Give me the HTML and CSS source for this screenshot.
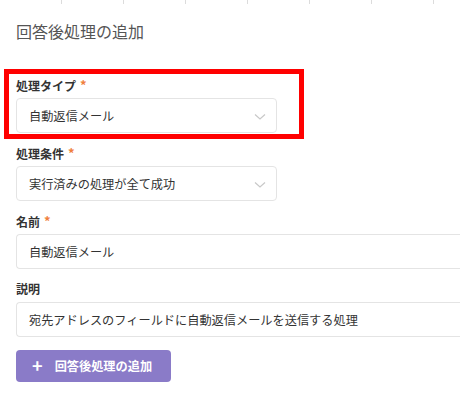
FILE: index.html
```
<!DOCTYPE html>
<html lang="ja">
<head>
<meta charset="utf-8">
<link rel="stylesheet" href="styles.css">
</head>
<body>
<div class="tabs">
  <span></span><span></span><span></span><span></span><span></span><span></span><span class="last"></span>
</div>
<h2 class="title">回答後処理の追加</h2>
<div class="form">
  <div class="field highlight">
    <label class="label">処理タイプ<span class="req">*</span></label>
    <div class="select short">
      <span>自動返信メール</span>
      <svg class="chev" width="12" height="8" viewBox="0 0 12 8"><path d="M1 1.5 L6 6 L11 1.5" fill="none" stroke="#c8c8c8" stroke-width="1.2"/></svg>
    </div>
  </div>
  <div class="field">
    <label class="label">処理条件<span class="req">*</span></label>
    <div class="select short">
      <span>実行済みの処理が全て成功</span>
      <svg class="chev" width="12" height="8" viewBox="0 0 12 8"><path d="M1 1.5 L6 6 L11 1.5" fill="none" stroke="#c8c8c8" stroke-width="1.2"/></svg>
    </div>
  </div>
  <div class="field">
    <label class="label">名前<span class="req">*</span></label>
    <div class="select wide"><span>自動返信メール</span></div>
  </div>
  <div class="field">
    <label class="label">説明</label>
    <div class="select wide"><span>宛先アドレスのフィールドに自動返信メールを送信する処理</span></div>
  </div>
  <button class="btn"><span class="plus">+</span>回答後処理の追加</button>
</div>
</body>
</html>
```
FILE: styles.css
```
* , *::before, *::after { box-sizing: border-box; }
body {
  margin: 0;
  width: 460px;
  height: 406px;
  overflow: hidden;
  background: #fff;
  font-family: "Noto Sans CJK JP", "Noto Sans", sans-serif;
  color: #333;
}
.tabs {
  display: flex;
  height: 4px;
  padding-left: 61px;
  overflow: hidden;
}
.tabs span {
  width: 62px;
  border-left: 1px solid #dcdcdc;
  flex: none;
}
.tabs span.last { width: 27px; }
.title {
  margin: 0;
  padding: 17px 0 0 16px;
  height: 73px;
  font-size: 16px;
  font-weight: normal;
  color: #555;
  line-height: 20px;
}
.form {
  padding-left: 16px;
  display: flex;
  flex-direction: column;
}
.field {
  display: flex;
  flex-direction: column;
  margin-bottom: 12px;
}
.field.highlight {
  position: relative;
}
.field.highlight::before {
  content: "";
  position: absolute;
  left: -12px;
  top: -8px;
  width: 300px;
  height: 70px;
  border: 5px solid #f00;
}
.label {
  font-size: 12px;
  font-weight: bold;
  color: #333;
  line-height: 16px;
  height: 16px;
  margin-bottom: 5px;
}
.req {
  color: #f0803c;
  margin-left: 4px;
  font-size: 13px;
  vertical-align: 1px;
}
.select {
  height: 35px;
  border: 1px solid #e4e4e4;
  border-radius: 4px;
  display: flex;
  align-items: center;
  justify-content: space-between;
  padding: 0 10px 0 12px;
  font-size: 12.2px;
  color: #333;
  background: #fff;
  flex: none;
}
.select.short { width: 261px; }
.select.wide {
  width: 444px;
  border-right: none;
  border-radius: 4px 0 0 4px;
}
.chev { margin-top: 2px; }
.btn {
  margin-top: 1px;
  width: 155px;
  height: 32px;
  border: none;
  border-radius: 4px;
  background: #8a7bc8;
  color: #fff;
  font-family: "Noto Sans CJK JP", "Noto Sans", sans-serif;
  font-size: 12.2px;
  font-weight: bold;
  display: flex;
  align-items: center;
  padding: 0 0 0 16px;
}
.plus {
  font-size: 18px;
  font-weight: bold;
  margin-right: 12px;
  line-height: 1;
  margin-top: -2px;
}
```
